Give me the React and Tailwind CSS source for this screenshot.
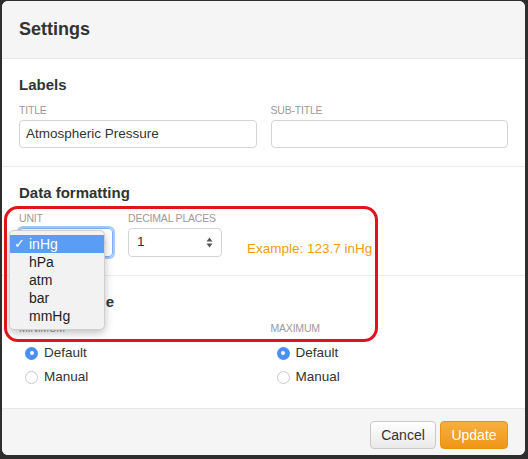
import React from "react";

function Label({ children }) {
  return <div className="text-[10.5px] leading-[12px] uppercase text-[#9a9a9a] tracking-[-0.2px]">{children}</div>;
}

function SelectArrows() {
  return (
    <svg width="7" height="11" viewBox="0 0 7 11" className="text-[#555]">
      <path d="M3.5 0.5 L6.5 4.5 L0.5 4.5 Z" fill="currentColor" />
      <path d="M3.5 10.5 L6.5 6.5 L0.5 6.5 Z" fill="currentColor" />
    </svg>
  );
}

function Radio({ checked, label }) {
  return (
    <div className="flex items-center h-[24px] pl-[6px]">
      {checked ? (
        <span className="w-[13px] h-[13px] rounded-full bg-[#4a90f2] flex items-center justify-center">
          <span className="w-[4px] h-[4px] rounded-full bg-white" />
        </span>
      ) : (
        <span className="w-[13px] h-[13px] rounded-full border border-[#c8c8c8] bg-white" />
      )}
      <span className="ml-[6px] text-[13.5px] text-[#333]">{label}</span>
    </div>
  );
}

export default function App() {
  const units = ["inHg", "hPa", "atm", "bar", "mmHg"];

  return (
    <div className="relative w-[528px] h-[459px] bg-[#2e2e2e] overflow-hidden" style={{ fontFamily: '"Liberation Sans", Arial, sans-serif' }}>
      <div className="ml-[2px] mt-[1px] w-[523px] h-[454px] bg-white rounded-[6px] overflow-hidden flex flex-col">
        {/* header */}
        <div className="h-[58px] bg-[#f5f5f5] border-b border-[#e6e6e6] px-[17px] flex items-center shrink-0">
          <h2 className="text-[18px] font-bold text-[#333]">Settings</h2>
        </div>

        {/* labels */}
        <div className="px-[17px] pt-[17px] pb-[18px] border-b border-[#ececec]">
          <h3 className="text-[15px] font-bold text-[#333] leading-[18px]">Labels</h3>
          <div className="grid grid-cols-2 gap-[14px] mt-[10px]">
            <div>
              <Label>Title</Label>
              <div className="mt-[4px] h-[28px] border border-[#d4d4d4] rounded-[4px] flex items-center px-[6px] text-[13.5px] text-[#333]">
                Atmospheric Pressure
              </div>
            </div>
            <div>
              <Label>Sub-title</Label>
              <div className="mt-[4px] h-[28px] border border-[#d4d4d4] rounded-[4px]" />
            </div>
          </div>
        </div>

        {/* data formatting */}
        <div className="px-[17px] pt-[17px] pb-[18px] border-b border-[#ececec]">
          <h3 className="text-[15px] font-bold text-[#333] leading-[18px]">Data formatting</h3>
          <div className="flex items-end mt-[10px]">
            <div className="w-[94px]">
              <Label>Unit</Label>
              <div className="mt-[4px] h-[29px] border border-[#7fb0f5] ring-2 ring-[#a9c9f7] rounded-[4px] flex items-center justify-end px-[6px]">
                <SelectArrows />
              </div>
            </div>
            <div className="w-[94px] ml-[15px]">
              <Label>Decimal places</Label>
              <div className="mt-[4px] h-[29px] border border-[#d4d4d4] rounded-[4px] flex items-center justify-between px-[8px] text-[13.5px] text-[#333]">
                <span>1</span>
                <SelectArrows />
              </div>
            </div>
            <div className="ml-[25px] mb-[-2px] text-[13.5px] text-[#f39a12]">Example: 123.7 inHg</div>
          </div>
        </div>

        {/* vertical scale */}
        <div className="px-[17px] pt-[17px] flex-1">
          <h3 className="text-[15px] font-bold text-[#333] leading-[18px]">Vertical scale</h3>
          <div className="grid grid-cols-2 gap-[14px] mt-[11px]">
            <div>
              <Label>Minimum</Label>
              <div className="mt-[7px]">
                <Radio checked label="Default" />
                <Radio label="Manual" />
              </div>
            </div>
            <div>
              <Label>Maximum</Label>
              <div className="mt-[7px]">
                <Radio checked label="Default" />
                <Radio label="Manual" />
              </div>
            </div>
          </div>
        </div>

        {/* footer */}
        <div className="h-[47px] bg-[#f5f5f5] border-t border-[#e6e6e6] px-[17px] pt-[12px] flex items-start justify-end gap-[4px] shrink-0">
          <button className="h-[28px] w-[66px] rounded-[4px] border border-[#c9c9c9] bg-gradient-to-b from-white to-[#e9e9e9] text-[14px] text-[#333]">
            Cancel
          </button>
          <button className="h-[28px] w-[68px] rounded-[4px] border border-[#e8930f] bg-gradient-to-b from-[#f8ae3e] to-[#ef9712] text-[14px] text-white">
            Update
          </button>
        </div>
      </div>

      {/* open unit dropdown */}
      <div className="absolute left-[9px] top-[230px] w-[96px] py-[4px] bg-[#f2f2f2] border border-[#cfcfcf] rounded-[5px] shadow-[0_3px_8px_rgba(0,0,0,0.25)]">
        {units.map((u, i) => (
          <div
            key={u}
            className={
              i === 0
                ? "h-[18px] flex items-center bg-[#5b9cf5] text-white text-[14px]"
                : "h-[18px] flex items-center text-[#222] text-[14px]"
            }
          >
            <span className="w-[19px] pl-[4px] text-[13px]">{i === 0 ? "✓" : ""}</span>
            <span>{u}</span>
          </div>
        ))}
      </div>

      {/* red annotation */}
      <div className="absolute left-[4px] top-[206px] w-[374px] h-[136px] border-[3px] border-[#e1141c] rounded-[14px] pointer-events-none" />
    </div>
  );
}
